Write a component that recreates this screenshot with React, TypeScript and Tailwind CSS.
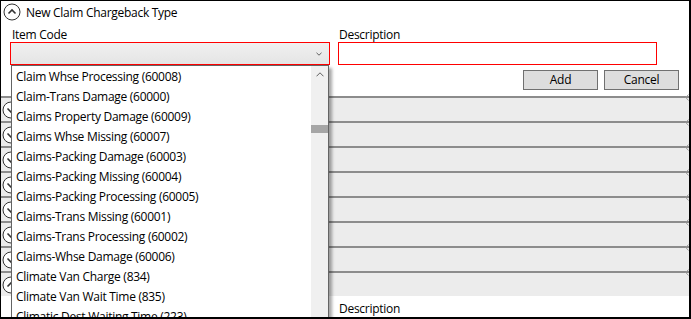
import React from "react";

const items = [
  "Claim Whse Processing (60008)",
  "Claim-Trans Damage (60000)",
  "Claims Property Damage (60009)",
  "Claims Whse Missing (60007)",
  "Claims-Packing Damage (60003)",
  "Claims-Packing Missing (60004)",
  "Claims-Packing Processing (60005)",
  "Claims-Trans Missing (60001)",
  "Claims-Trans Processing (60002)",
  "Claims-Whse Damage (60006)",
  "Climate Van Charge (834)",
  "Climate Van Wait Time (835)",
  "Climatic Dest Waiting Time (223)",
];

function Toggle({ up }: { up: boolean }) {
  return (
    <svg width="18" height="18" viewBox="0 0 18 18" className="shrink-0">
      <circle cx="9" cy="9" r="8" fill="#ffffff" stroke="#333333" strokeWidth="1" />
      {up ? (
        <path d="M5.5 10.5 L9 7 L12.5 10.5" fill="none" stroke="#333333" strokeWidth="1.6" />
      ) : (
        <path d="M5.5 7.5 L9 11 L12.5 7.5" fill="none" stroke="#333333" strokeWidth="1.6" />
      )}
    </svg>
  );
}

export default function App() {
  const rows = [0, 1, 2, 3, 4, 5, 6, 7];
  return (
    <div className="w-[691px] h-[319px] bg-white font-['Open_Sans',sans-serif] text-[12px] tracking-[-0.28px] text-black">
      <div className="relative w-[691px] h-[319px] border-l border-t border-r-2 border-b-2 border-black overflow-hidden flex flex-col">
        {/* header */}
        <div className="shrink-0 h-[22px] flex items-center pl-[2px] gap-[5px]">
          <Toggle up={true} />
          <span className="leading-[16px] pt-[1px]">New Claim Chargeback Type</span>
        </div>
        {/* form */}
        <div className="shrink-0 grid grid-cols-[320px_319px] gap-x-[8px] pl-[9px]">
          <div className="pt-[4px] pl-[2px] leading-[15px]">Item Code</div>
          <div className="pt-[4px] pl-[1px] leading-[15px]">Description</div>
          <div className="h-[23px] border border-[#ff0000] bg-gradient-to-b from-[#f0f0f0] to-[#e5e5e5] flex items-center justify-end pr-[7px]">
            <svg width="6" height="4" viewBox="0 0 6 4">
              <path d="M0.5 0.8 L3 3.2 L5.5 0.8" fill="none" stroke="#606060" strokeWidth="1" />
            </svg>
          </div>
          <div className="h-[23px] border border-[#ff0000] bg-white" />
        </div>
        {/* buttons */}
        <div className="shrink-0 flex justify-end gap-[6px] pr-[10px] mt-[5px]">
          <button className="w-[75px] h-[20px] bg-[#dddddd] border border-[#707070] leading-[16px]">Add</button>
          <button className="w-[75px] h-[20px] bg-[#dddddd] border border-[#707070] leading-[16px]">Cancel</button>
        </div>
        {/* panel rows */}
        <div className="shrink-0 mt-[6px] flex flex-col">
          {rows.map((r) => (
            <div
              key={r}
              className="relative shrink-0 h-[25px] bg-[#ececec] border-t-2 border-[#8c8c8c] flex items-center pl-[1px]"
            >
              <Toggle up={r === 7} />
              <svg width="4" height="7" viewBox="0 0 4 7" className="absolute right-0 top-[-4px]">
                <path d="M3.5 0.5 L0.8 3.5 L3.5 6.5" fill="none" stroke="#9a9a9a" strokeWidth="1" />
              </svg>
            </div>
          ))}
        </div>
        {/* expanded panel content */}
        <div className="shrink-0 grid grid-cols-[320px_319px] gap-x-[8px] pl-[9px] mt-[5px]">
          <div />
          <div className="pl-[1px] leading-[16px]">Description</div>
          <div />
          <div className="h-[23px] border border-[#abadb3] bg-white" />
        </div>

        {/* dropdown popup */}
        <div className="absolute left-[10px] top-[64px] w-[318px] h-[260px] bg-white border border-[#646464] shadow-[3px_3px_3px_rgba(0,0,0,0.35)] flex">
          <div className="flex-1 flex flex-col pt-[1px]">
            {items.map((it) => (
              <div key={it} className="shrink-0 h-[20px] leading-[20px] pl-[4px] whitespace-nowrap">
                {it}
              </div>
            ))}
          </div>
          <div className="w-[17px] bg-[#f0f0f0] flex flex-col items-center">
            <div className="h-[17px] w-full flex items-center justify-center">
              <svg width="8" height="5" viewBox="0 0 8 5">
                <path d="M0.5 4.3 L4 0.8 L7.5 4.3" fill="none" stroke="#606060" strokeWidth="1" />
              </svg>
            </div>
            <div className="mt-[42px] h-[8px] w-full bg-[#a6a6a6]" />
          </div>
        </div>
      </div>
    </div>
  );
}
